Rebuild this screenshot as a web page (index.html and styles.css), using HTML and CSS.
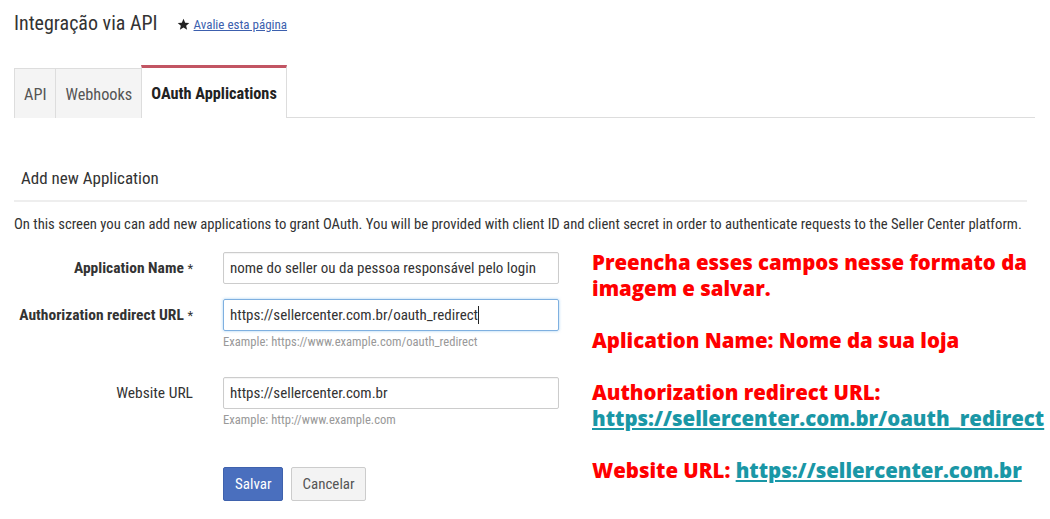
FILE: index.html
```html
<!DOCTYPE html>
<html lang="pt">
<head>
<meta charset="utf-8">
<link rel="stylesheet" href="styles.css">
</head>
<body>
<div class="page">
  <div class="header">
    <h1 class="title">Integração via API</h1>
    <span class="rate">
      <svg class="star" viewBox="0 0 24 24" width="13" height="13"><path d="M12 1.5l3.1 7.1 7.6.6-5.8 5 1.8 7.5L12 17.7l-6.7 4 1.8-7.5-5.8-5 7.6-.6z" fill="#222"/></svg>
      <a class="rate-link" href="#">Avalie esta página</a>
    </span>
  </div>

  <div class="tabs">
    <div class="tab">API</div>
    <div class="tab">Webhooks</div>
    <div class="tab active">OAuth Applications</div>
  </div>

  <div class="section-title">Add new Application</div>
  <p class="intro">On this screen you can add new applications to grant OAuth. You will be provided with client ID and client secret in order to authenticate requests to the Seller Center platform.</p>

  <div class="content">
    <div class="form">
      <div class="row">
        <label class="label req">Application Name <span class="ast">*</span></label>
        <div class="field"><div class="input">nome do seller ou da pessoa responsável pelo login</div></div>
      </div>
      <div class="row">
        <label class="label req">Authorization redirect URL <span class="ast">*</span></label>
        <div class="field">
          <div class="input focus">https://sellercenter.com.br/oauth_redirect<span class="caret"></span></div>
          <div class="help">Example: https://www.example.com/oauth_redirect</div>
        </div>
      </div>
      <div class="row row-web">
        <label class="label">Website URL</label>
        <div class="field">
          <div class="input">https://sellercenter.com.br</div>
          <div class="help">Example: http://www.example.com</div>
        </div>
      </div>
      <div class="row row-btn">
        <span></span>
        <div class="buttons">
          <button class="btn btn-primary">Salvar</button>
          <button class="btn btn-default">Cancelar</button>
        </div>
      </div>
    </div>

    <div class="note">
      <p>Preencha esses campos nesse formato da<br>imagem e salvar.</p>
      <p>Aplication Name: Nome da sua loja</p>
      <p>Authorization redirect URL:<br><a href="#">https://sellercenter.com.br/oauth_redirect</a></p>
      <p>Website URL: <a href="#">https://sellercenter.com.br</a></p>
    </div>
  </div>
</div>
</body>
</html>
```

FILE: styles.css
```css
* { box-sizing: border-box; }
html, body { margin: 0; background: #fff; }
body {
  font-family: "Roboto", "Liberation Sans", Arial, sans-serif;
  font-stretch: 75%;
  color: #333;
}
.page { padding: 10px 15px 0 14px; width: 1050px; }

.header { display: flex; align-items: center; height: 26px; }
.title { margin: 0; font-size: 20px; font-weight: normal; color: #333; line-height: 24px; }
.rate { display: flex; align-items: center; margin-left: 19px; margin-top: 3px; }
.star { margin-right: 4px; }
.rate-link { font-size: 13px; color: #3c5fae; text-decoration: underline; }

.tabs {
  display: flex; align-items: flex-end; margin-top: 29px;
  border-bottom: 1px solid #ddd; width: 1021px; height: 53px;
}
.tab {
  height: 50px; padding: 2px 9px 0; display: flex; align-items: center;
  font-size: 16.3px; color: #555; background: #f4f4f4;
  border: 1px solid #ddd; border-bottom: none; border-right: none;
  margin-bottom: -1px;
}
.tab.active {
  height: 53px; background: #fff; color: #222; font-weight: bold;
  border-top: 3px solid #c25563; border-right: 1px solid #ddd; border-left: 1px solid #ddd;
  padding: 0 9px;
}

.section-title {
  margin-top: 50px; padding: 0 0 12px 7px; font-size: 17px; color: #333;
  border-bottom: 2px solid #eee; width: 1013px; line-height: 20px;
}
.intro { margin: 13px 0 0; font-size: 14.7px; color: #333; line-height: 18px; white-space: nowrap; }

.content { display: flex; margin-top: 19px; }
.form { width: 578px; flex: none; }
.row { display: grid; grid-template-columns: 179px 336px; column-gap: 30px; margin-bottom: 14px; }
.label { text-align: right; font-size: 15.5px; line-height: 32px; color: #333; white-space: nowrap; }
.label.req { font-weight: bold; }
.ast { font-weight: normal; font-size: 13px; }
.input {
  height: 32px; border: 1px solid #ccc; border-radius: 2px; padding: 0 6px;
  font-size: 15px; line-height: 30px; color: #333; white-space: nowrap; overflow: hidden;
  box-shadow: inset 0 1px 1px rgba(0,0,0,.05);
}
.input.focus { border-color: #7fb0e0; box-shadow: 0 0 3px rgba(102,175,233,.6); }
.caret { display: inline-block; width: 1px; height: 18px; background: #222; vertical-align: middle; margin-top: -3px; }
.help { font-size: 12.6px; color: #999; margin-top: 3px; line-height: 15px; }
.row-web { margin-top: 28px; }
.row-btn { margin-top: 40px; }
.buttons { display: flex; gap: 8px; }
.btn {
  font-family: inherit; font-stretch: 75%; font-size: 15px; height: 34px; border-radius: 2px;
  cursor: pointer;
}
.btn-primary { background: #4a6fbe; color: #fff; border: 1px solid #3f62ad; padding: 0 11px; }
.btn-default { background: #f3f3f3; color: #555; border: 1px solid #ccc; padding: 0 10px; }

.note {
  font-family: "Open Sans", "Noto Sans", sans-serif; font-stretch: 100%; font-weight: 800; font-size: 20.4px;
  line-height: 26px; color: #ff0000; margin-top: -3px; white-space: nowrap;
}
.note p { margin: 0 0 26px; }
.note a { color: #1a97a6; text-decoration: underline; }
```
